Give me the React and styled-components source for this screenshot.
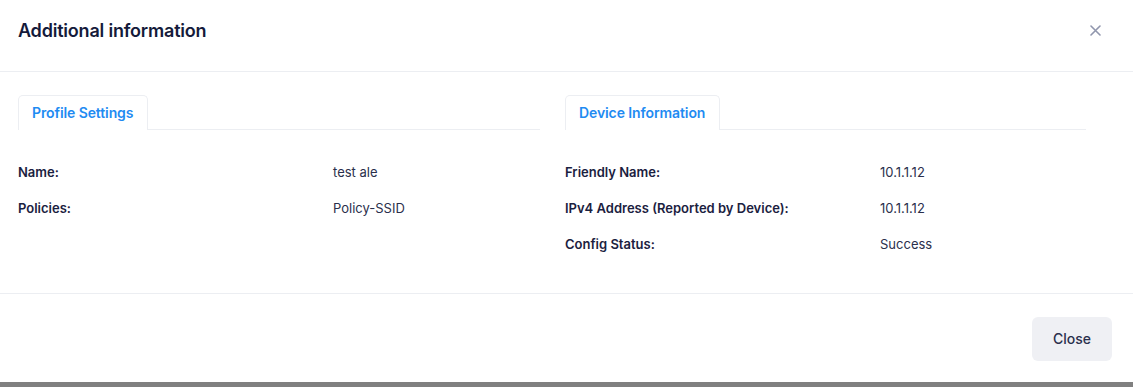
import React from "react";
import styled, { createGlobalStyle } from "styled-components";

const Global = createGlobalStyle`
  html, body { margin: 0; padding: 0; }
  body {
    background: #808080;
    font-family: Inter, "Noto Sans", sans-serif;
    -webkit-font-smoothing: antialiased;
  }
`;

const Modal = styled.div`
  width: 1133px;
  height: 382px;
  background: #ffffff;
  display: flex;
  flex-direction: column;
  box-sizing: border-box;
`;

const Header = styled.div`
  height: 72px;
  box-sizing: border-box;
  display: flex;
  align-items: center;
  justify-content: space-between;
  padding: 0 31px 10px 18px;
  border-bottom: 1px solid #eceef2;
`;

const Title = styled.h2`
  margin: 0;
  font-size: 18px;
  font-weight: 600;
  color: #141a3a;
  letter-spacing: -0.2px;
`;

const CloseIcon = styled.button`
  border: none;
  background: none;
  padding: 0;
  width: 14px;
  height: 14px;
  display: flex;
  align-items: center;
  justify-content: center;
  cursor: pointer;
`;

const Body = styled.div`
  flex: 1;
  display: grid;
  grid-template-columns: 522px 521px;
  column-gap: 25px;
  padding: 23px 0 0 18px;
  border-bottom: 1px solid #eceef2;
`;

const Section = styled.div`
  display: flex;
  flex-direction: column;
`;

const TabBar = styled.div`
  display: flex;
  border-bottom: 1px solid #eceef2;
`;

const Tab = styled.div`
  height: 35px;
  box-sizing: border-box;
  padding: 0 14px 2px 13px;
  display: flex;
  align-items: center;
  border: 1px solid #eceef2;
  border-bottom: none;
  border-top-left-radius: 5px;
  border-top-right-radius: 5px;
  margin-bottom: -1px;
  background: #fff;
  font-size: 14px;
  font-weight: 600;
  letter-spacing: -0.1px;
  color: #1f8bf2;
`;

const Rows = styled.div`
  display: grid;
  grid-template-columns: 315px 1fr;
  grid-auto-rows: 36px;
  align-items: center;
  padding-top: 24px;
`;

const Label = styled.div`
  font-size: 13px;
  font-weight: 600;
  color: #1b2140;
`;

const Value = styled.div`
  font-size: 13px;
  font-weight: 400;
  color: #2a2f4c;
`;

const Footer = styled.div`
  height: 88px;
  box-sizing: border-box;
  display: flex;
  justify-content: flex-end;
  align-items: flex-start;
  padding: 23px 21px 0 0;
`;

const Button = styled.button`
  width: 80px;
  height: 44px;
  border: none;
  border-radius: 6px;
  background: #eff0f4;
  font-family: inherit;
  font-size: 14px;
  font-weight: 500;
  color: #2a2f4c;
  padding: 0 0 2px 0;
  cursor: pointer;
`;

const InfoSection = ({ title, rows }) => (
  <Section>
    <TabBar>
      <Tab>{title}</Tab>
    </TabBar>
    <Rows>
      {rows.map(([l, v]) => (
        <React.Fragment key={l}>
          <Label>{l}</Label>
          <Value>{v}</Value>
        </React.Fragment>
      ))}
    </Rows>
  </Section>
);

export default function App() {
  return (
    <>
      <Global />
      <Modal>
        <Header>
          <Title>Additional information</Title>
          <CloseIcon aria-label="Close">
            <svg width="11" height="11" viewBox="0 0 11 11">
              <path d="M1 1L10 10M10 1L1 10" stroke="#9096ad" strokeWidth="1.6" strokeLinecap="round" />
            </svg>
          </CloseIcon>
        </Header>
        <Body>
          <InfoSection
            title="Profile Settings"
            rows={[
              ["Name:", "test ale"],
              ["Policies:", "Policy-SSID"],
            ]}
          />
          <InfoSection
            title="Device Information"
            rows={[
              ["Friendly Name:", "10.1.1.12"],
              ["IPv4 Address (Reported by Device):", "10.1.1.12"],
              ["Config Status:", "Success"],
            ]}
          />
        </Body>
        <Footer>
          <Button>Close</Button>
        </Footer>
      </Modal>
    </>
  );
}
